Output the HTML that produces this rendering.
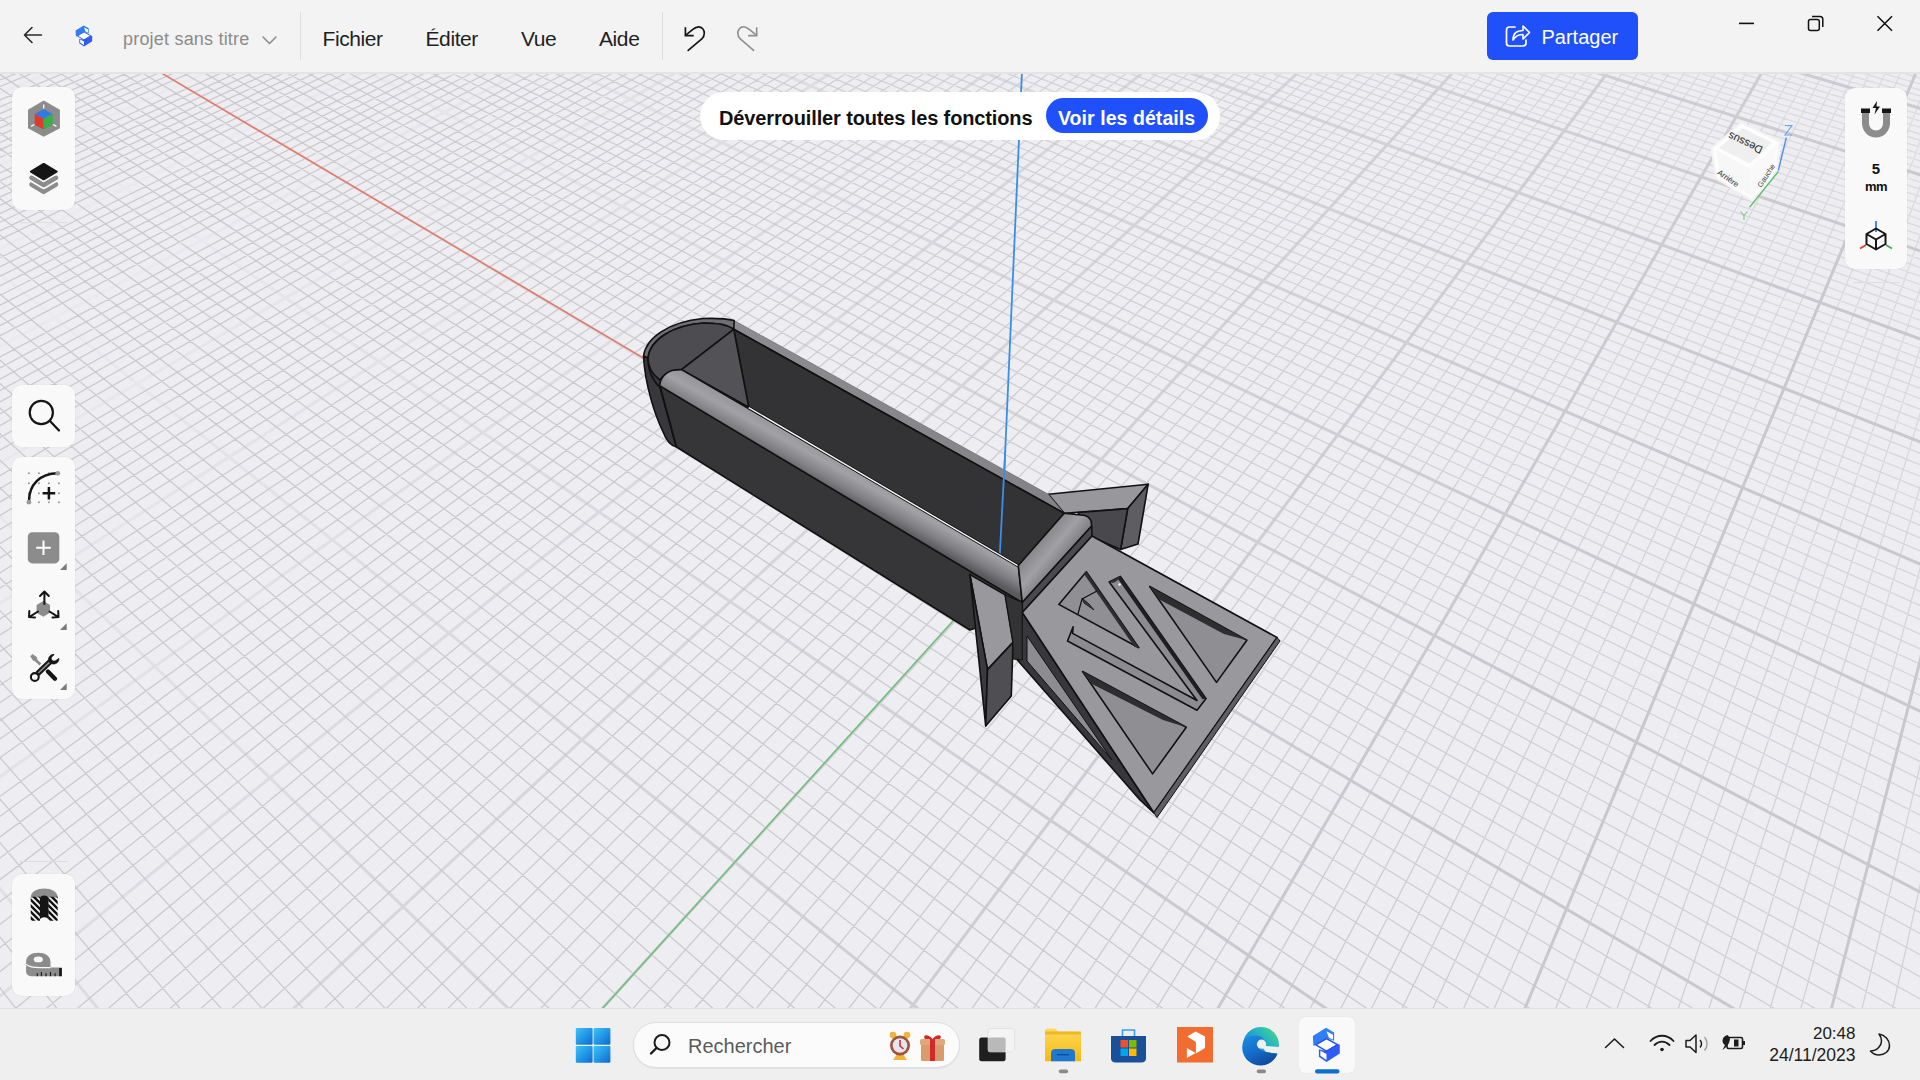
<!DOCTYPE html>
<html><head><meta charset="utf-8">
<style>
html,body{margin:0;padding:0;}
body{width:1920px;height:1080px;overflow:hidden;position:relative;background:#f3f3f3;font-family:"Liberation Sans",sans-serif;}
.abs{position:absolute;}
#topbar{position:absolute;left:0;top:0;width:1920px;height:72px;background:#f3f3f3;}
.menu{position:absolute;top:25px;font-size:20px;color:#1e1e1e;line-height:24px;white-space:nowrap;}
.sep{position:absolute;top:12px;width:1px;height:48px;background:#dcdcdc;}
#scene{position:absolute;left:0;top:0;}
.tb{position:absolute;left:12px;width:63px;background:#f9f9f9;border-radius:10px;box-shadow:0 0 2px rgba(0,0,0,0.08);}
#taskbar{position:absolute;left:0;top:1008px;width:1920px;height:72px;background:#efefef;border-top:1px solid #dedede;}
</style></head><body>
<svg id="scene" width="1920" height="1080" viewBox="0 0 1920 1080">
<defs>
<filter id="gblur" x="0" y="0" width="1" height="1"><feGaussianBlur stdDeviation="0.5"/></filter>
<linearGradient id="mgrad" gradientUnits="userSpaceOnUse" x1="300" y1="72" x2="1300" y2="950"><stop offset="0" stop-color="#fff" stop-opacity="0.1"/><stop offset="0.45" stop-color="#fff" stop-opacity="0.6"/><stop offset="1" stop-color="#fff" stop-opacity="1"/></linearGradient>
<linearGradient id="ngrad" gradientUnits="userSpaceOnUse" x1="1920" y1="72" x2="1100" y2="900"><stop offset="0" stop-color="#fff" stop-opacity="0.5"/><stop offset="1" stop-color="#fff" stop-opacity="1"/></linearGradient>
<mask id="minmask" maskUnits="userSpaceOnUse" x="0" y="72" width="1920" height="936"><rect x="0" y="72" width="1920" height="936" fill="url(#ngrad)"/></mask>
<mask id="majmask" maskUnits="userSpaceOnUse" x="0" y="72" width="1920" height="936"><rect x="0" y="72" width="1920" height="936" fill="url(#mgrad)"/></mask>
<clipPath id="vp"><rect x="0" y="72" width="1920" height="936"/></clipPath>
<linearGradient id="fil" gradientUnits="userSpaceOnUse" x1="840" y1="459" x2="824" y2="488">
<stop offset="0" stop-color="#96969b"/><stop offset="0.3" stop-color="#a1a1a6"/><stop offset="0.7" stop-color="#7e7e83"/><stop offset="1" stop-color="#59595e"/></linearGradient>
<linearGradient id="rim" gradientUnits="userSpaceOnUse" x1="734" y1="320" x2="1064" y2="513">
<stop offset="0" stop-color="#8c8c91"/><stop offset="1" stop-color="#828287"/></linearGradient>
<linearGradient id="efil" gradientUnits="userSpaceOnUse" x1="1040" y1="540" x2="1070" y2="565">
<stop offset="0" stop-color="#86868b"/><stop offset="0.4" stop-color="#a0a0a5"/><stop offset="1" stop-color="#6a6a6f"/></linearGradient>
</defs>
<g clip-path="url(#vp)">
<rect x="0" y="72" width="1920" height="936" fill="#eeedf2"/>
<g filter="url(#gblur)">
<path d="M2208.0 73.6L1737.7 4423.6M2193.1 69.7L1666.3 4304.7M2178.4 65.8L1598.0 4191.1M2163.7 62.0L1532.7 4082.3M2149.2 58.1L1470.1 3978.0M2134.8 54.3L1410.1 3878.1M2120.5 50.6L1352.5 3782.1M2106.3 46.8L1297.1 3690.0M2092.3 43.1L1243.9 3601.4M2064.5 35.8L1143.5 3434.1M2050.7 32.2L1096.0 3355.1M2037.1 28.6L1050.2 3278.9M2023.5 25.1L1006.1 3205.3M2010.1 21.5L963.5 3134.4M1996.8 18.0L922.3 3065.8M1983.6 14.5L882.5 2999.6M1970.5 11.1L844.0 2935.5M1957.5 7.7L806.8 2873.5M1931.7 0.9L735.8 2755.3M1919.0 -2.4L702.0 2699.0M1906.4 -5.8L669.2 2644.4M1893.8 -9.1L637.4 2591.4M1881.4 -12.3L606.5 2540.0M1869.0 -15.6L576.5 2490.0M1856.8 -18.8L547.4 2441.5M1844.6 -22.0L519.1 2394.4M1832.5 -25.2L491.6 2348.6M1808.6 -31.5L438.8 2260.7M1796.8 -34.6L413.5 2218.6M1785.1 -37.7L388.8 2177.5M1773.4 -40.7L364.8 2137.5M1761.9 -43.8L341.4 2098.5M1750.4 -46.8L318.6 2060.6M1739.0 -49.8L296.4 2023.6M1727.7 -52.8L274.7 1987.5M1716.4 -55.7L253.6 1952.2M1694.2 -61.6L212.8 1884.3M1683.2 -64.5L193.1 1851.6M1672.2 -67.4L173.9 1819.6M1661.4 -70.2L155.1 1788.3M1650.6 -73.1L136.8 1757.8M1639.9 -75.9L118.9 1728.0M1629.3 -78.7L101.3 1698.8M1618.7 -81.5L84.2 1670.2M1608.2 -84.2L67.4 1642.3M1587.5 -89.7L35.0 1588.3M1577.2 -92.4L19.3 1562.1M1567.0 -95.1L3.9 1536.5M1556.9 -97.7L-11.2 1511.4M1546.8 -100.4L-26.0 1486.8M1536.8 -103.0L-40.4 1462.7M1526.9 -105.6L-54.6 1439.1M1517.0 -108.2L-68.5 1416.0M1507.2 -110.8L-82.1 1393.3M1487.8 -115.9L-108.5 1349.3M1478.2 -118.4L-121.4 1327.9M1468.6 -120.9L-134.0 1306.9M1459.1 -123.4L-146.3 1286.3M1449.7 -125.9L-158.5 1266.1M1440.3 -128.4L-170.4 1246.3M1431.0 -130.8L-182.1 1226.8M1421.8 -133.3L-193.6 1207.7M1412.6 -135.7L-204.8 1188.9M1394.4 -140.5L-226.8 1152.4M1385.4 -142.8L-237.5 1134.6M1376.5 -145.2L-248.0 1117.1M1367.6 -147.5L-258.3 1099.9M1358.7 -149.9L-268.5 1083.0M1349.9 -152.2L-278.5 1066.4M1341.2 -154.5L-288.3 1050.0M1332.5 -156.8L-297.9 1033.9M1323.9 -159.0L-307.4 1018.1M1306.8 -163.5L-325.9 987.3M1298.3 -165.8L-335.0 972.2M1289.9 -168.0L-343.9 957.4M1281.6 -170.2L-352.6 942.8M1273.2 -172.4L-361.2 928.5M1265.0 -174.5L-369.7 914.4M1256.8 -176.7L-378.1 900.5M1248.6 -178.8L-386.3 886.8M1240.5 -181.0L-394.4 873.3M1224.4 -185.2L-410.2 846.9M1216.4 -187.3L-418.0 834.0M1208.5 -189.4L-425.6 821.3M1200.6 -191.5L-433.1 808.8M1192.8 -193.5L-440.5 796.5M1185.0 -195.6L-447.8 784.3M1177.3 -197.6L-455.0 772.3M1169.6 -199.6L-462.1 760.5M1162.0 -201.6L-469.1 748.9M1146.8 -205.6L-482.8 726.0M1139.3 -207.6L-489.5 714.9M1131.8 -209.6L-496.1 703.9M1124.4 -211.5L-502.7 693.0M1117.0 -213.5L-509.1 682.3M1109.7 -215.4L-515.4 671.7M1102.4 -217.3L-521.7 661.3M1095.1 -219.2L-527.9 651.0M1087.9 -221.1L-534.0 640.8M1073.6 -224.9L-545.9 620.9M1066.5 -226.8L-551.8 611.2M1059.4 -228.6L-557.6 601.5M1052.4 -230.5L-563.3 592.0M1045.4 -232.3L-569.0 582.6M1038.5 -234.1L-574.5 573.3M1031.6 -235.9L-580.0 564.2M1024.7 -237.8L-585.5 555.1M1017.9 -239.5L-590.8 546.2M1004.3 -243.1L-601.4 528.6M997.6 -244.9L-606.5 520.0M990.9 -246.6L-611.6 511.5M984.3 -248.4L-616.7 503.1M977.7 -250.1L-621.7 494.8M971.1 -251.8L-626.6 486.6M964.6 -253.6L-631.5 478.5M958.1 -255.3L-636.3 470.5M951.6 -257.0L-641.1 462.6M938.8 -260.4L-650.4 447.0M932.4 -262.0L-655.0 439.3M926.1 -263.7L-659.5 431.8M919.8 -265.3L-664.0 424.3M913.6 -267.0L-668.5 416.9M907.3 -268.6L-672.9 409.6M901.1 -270.3L-677.2 402.3M895.0 -271.9L-681.5 395.2M888.8 -273.5L-685.7 388.1M876.7 -276.7L-694.1 374.2M870.6 -278.3L-698.2 367.4M864.6 -279.9L-702.3 360.6M858.7 -281.4L-706.3 353.9M852.7 -283.0L-710.3 347.3M846.8 -284.6L-714.2 340.7M840.9 -286.1L-718.1 334.2M835.1 -287.6L-722.0 327.8M829.2 -289.2L-725.8 321.5M2222.6 82.8L818.4 -288.7M2222.1 88.1L813.3 -286.7M2221.6 93.5L808.1 -284.7M2221.1 98.9L802.9 -282.7M2220.6 104.4L797.7 -280.7M2220.1 109.9L792.4 -278.6M2219.5 115.5L787.1 -276.5M2219.0 121.2L781.8 -274.5M2218.5 126.9L776.4 -272.4M2217.4 138.6L765.6 -268.1M2216.9 144.6L760.1 -266.0M2216.3 150.6L754.6 -263.8M2215.8 156.7L749.0 -261.7M2215.2 162.8L743.4 -259.5M2214.6 169.1L737.8 -257.3M2214.1 175.4L732.1 -255.1M2213.5 181.7L726.3 -252.8M2212.9 188.2L720.6 -250.6M2211.7 201.4L708.9 -246.0M2211.0 208.1L703.0 -243.7M2210.4 214.9L697.1 -241.4M2209.8 221.8L691.1 -239.1M2209.2 228.7L685.1 -236.7M2208.5 235.8L679.0 -234.4M2207.8 242.9L672.9 -232.0M2207.2 250.2L666.7 -229.6M2206.5 257.5L660.5 -227.1M2205.1 272.5L647.9 -222.2M2204.4 280.1L641.6 -219.8M2203.7 287.8L635.2 -217.3M2203.0 295.7L628.7 -214.7M2202.3 303.6L622.2 -212.2M2201.5 311.7L615.7 -209.6M2200.8 319.8L609.1 -207.1M2200.0 328.1L602.4 -204.5M2199.3 336.5L595.7 -201.9M2197.7 353.7L582.1 -196.6M2196.9 362.4L575.3 -193.9M2196.1 371.3L568.3 -191.2M2195.2 380.3L561.4 -188.5M2194.4 389.4L554.3 -185.7M2193.5 398.7L547.2 -182.9M2192.7 408.1L540.1 -180.2M2191.8 417.7L532.9 -177.3M2190.9 427.4L525.6 -174.5M2189.1 447.2L510.9 -168.8M2188.1 457.4L503.5 -165.9M2187.2 467.7L496.0 -162.9M2186.2 478.2L488.4 -160.0M2185.3 488.8L480.7 -157.0M2184.3 499.6L473.0 -154.0M2183.3 510.6L465.3 -151.0M2182.2 521.8L457.4 -147.9M2181.2 533.1L449.6 -144.8M2179.1 556.3L433.6 -138.6M2178.0 568.2L425.4 -135.4M2176.9 580.4L417.3 -132.2M2175.7 592.7L409.0 -129.0M2174.6 605.2L400.7 -125.8M2173.4 617.9L392.3 -122.5M2172.2 630.9L383.9 -119.2M2171.0 644.1L375.3 -115.9M2169.8 657.5L366.7 -112.5M2167.2 685.1L349.2 -105.7M2165.9 699.3L340.4 -102.2M2164.6 713.7L331.5 -98.8M2163.3 728.4L322.5 -95.2M2161.9 743.4L313.4 -91.7M2160.5 758.6L304.2 -88.1M2159.1 774.2L294.9 -84.5M2157.6 790.0L285.6 -80.9M2156.1 806.2L276.1 -77.2M2153.1 839.4L257.0 -69.7M2151.5 856.6L247.3 -65.9M2149.9 874.0L237.5 -62.1M2148.2 891.9L227.6 -58.3M2146.6 910.1L217.6 -54.4M2144.9 928.7L207.6 -50.4M2143.1 947.6L197.4 -46.5M2141.3 967.0L187.1 -42.4M2139.5 986.8L176.7 -38.4M2135.8 1027.7L155.7 -30.2M2133.8 1048.9L145.0 -26.0M2131.8 1070.5L134.2 -21.8M2129.8 1092.6L123.3 -17.5M2127.7 1115.2L112.3 -13.2M2125.6 1138.3L101.2 -8.9M2123.4 1162.0L89.9 -4.5M2121.2 1186.3L78.6 -0.1M2118.9 1211.1L67.1 4.4M2114.2 1262.6L43.8 13.5M2111.7 1289.4L32.0 18.1M2109.2 1316.8L20.0 22.7M2106.6 1344.9L7.9 27.5M2104.0 1373.7L-4.3 32.2M2101.3 1403.3L-16.6 37.0M2098.5 1433.7L-29.1 41.9M2095.6 1464.9L-41.7 46.8M2092.7 1497.0L-54.4 51.8M2086.5 1563.9L-80.3 61.9M2083.3 1598.8L-93.5 67.0M2080.0 1634.6L-106.8 72.2M2076.6 1671.6L-120.2 77.5M2073.1 1709.6L-133.9 82.8M2069.5 1748.8L-147.6 88.1M2065.8 1789.2L-161.5 93.6M2062.0 1830.9L-175.6 99.1M2058.0 1873.9L-189.8 104.6M2049.7 1964.2L-218.8 115.9M2045.4 2011.6L-233.6 121.7M2040.9 2060.6L-248.5 127.5M2036.2 2111.3L-263.6 133.4M2031.4 2163.8L-278.8 139.3M2026.4 2218.1L-294.3 145.4M2021.2 2274.5L-309.9 151.5M2015.9 2332.9L-325.7 157.6M2010.3 2393.6L-341.7 163.9M1998.5 2522.1L-374.4 176.6M1992.3 2590.2L-391.0 183.1M1985.7 2661.0L-407.8 189.6M1979.0 2734.9L-424.8 196.3M1971.9 2811.9L-442.1 203.0M1964.5 2892.3L-459.5 209.8M1956.8 2976.3L-477.2 216.7M1948.7 3064.1L-495.1 223.7M1940.3 3155.9L-513.3 230.8M1922.2 3353.2L-550.3 245.2M1912.4 3459.3L-569.1 252.6M1902.2 3570.9L-588.3 260.1M1891.4 3688.3L-607.6 267.6M1880.0 3812.2L-627.3 275.3M1868.0 3942.9L-647.2 283.0M1855.3 4081.1L-667.3 290.9M1841.9 4227.6L-687.8 298.9M1827.6 4382.9L-708.5 307.0" stroke="#cbcacf" stroke-width="1.3" fill="none" mask="url(#minmask)"/>
<path d="M2223.0 77.6L1812.4 4548.0M2078.3 39.5L1192.7 3516.2M1944.5 4.3L770.7 2813.5M1820.5 -28.4L464.8 2304.1M1705.3 -58.7L232.9 1917.9M1597.8 -87.0L51.0 1615.0M1497.5 -113.4L-95.4 1371.1M1403.5 -138.1L-215.9 1170.5M1315.3 -161.3L-316.7 1002.6M1232.4 -183.1L-402.4 860.0M1154.4 -203.6L-476.0 737.4M1080.7 -223.0L-540.0 630.8M1011.1 -241.3L-596.1 537.4M945.2 -258.7L-645.8 454.7M882.7 -275.1L-690.0 381.1M823.4 -290.7L-729.6 315.2M2223.0 77.6L823.4 -290.7M2218.0 132.7L771.0 -270.3M2212.3 194.8L714.8 -248.3M2205.8 264.9L654.2 -224.7M2198.5 345.0L589.0 -199.2M2190.0 437.2L518.3 -171.7M2180.1 544.6L441.6 -141.7M2168.5 671.2L358.0 -109.1M2154.6 822.6L266.6 -73.5M2137.7 1007.1L166.3 -34.3M2116.6 1236.6L55.5 8.9M2089.6 1530.0L-67.3 56.8M2054.0 1918.3L-204.2 110.2M2004.5 2456.6L-357.9 170.2M1931.4 3252.2L-531.7 238.0M1812.4 4548.0L-729.6 315.2" stroke="#c9c8cd" stroke-width="3" fill="none" mask="url(#majmask)"/>
</g>
<line x1="1000" y1="569" x2="43" y2="3" stroke="#e07a6c" stroke-width="1.6"/>
<line x1="1000" y1="569" x2="34" y2="1637" stroke="#6cc07a" stroke-width="1.6"/>
<line x1="1000" y1="569" x2="1022.5" y2="60" stroke="#3a8ee8" stroke-width="1.8"/>
<rect x="0" y="72" width="1920" height="2" fill="#e4e4e6"/>
<g stroke="#111" stroke-width="1.6" stroke-linejoin="round">
<path d="M643.5,356 C646,338 668,322 703,318.5 C718,318 728,319 734.2,320.5 L1048.3,494.2 L1091.7,526 L1022.3,612.5 L969.9,630 L676.5,447 C671,446 666,440 662.6,430.8 C655,415 645,385 643.5,356 Z" fill="#38383c" stroke="none"/>
<!-- top fin -->
<polygon points="1048.3,494.2 1148.2,484.2 1127.7,508.6 1064.2,513.3" fill="#97979c"/>
<polygon points="1127.7,508.6 1148.2,484.2 1138,544 1120.6,549.5" fill="#5d5d62"/>
<polygon points="1078,512.5 1127.7,508.6 1120.6,549.5 1092,537" fill="#48484d"/>
<!-- back rim strip -->
<polygon points="734.2,320.5 1048.3,494.2 1064.2,513.3 733.75,329.3" fill="url(#rim)" stroke="none"/>
<line x1="733.75" y1="329.3" x2="1064.2" y2="513.3"/>
<!-- inner back wall -->
<polygon points="733.75,329.3 1064.2,513.3 1018.3,566 748.75,407.2" fill="#333336"/>
<line x1="1005.3" y1="450" x2="999.8" y2="554.5" stroke="#3a8ee8" stroke-width="1.8"/>
<!-- cap outer wall -->
<path d="M643.5,356 C645,385 655,415 662.6,430.8 C666,440 671,446 676.5,447 L660,387.4 C652,380 648,370 648,358 Z" fill="#38383c"/>
<!-- cap rim -->
<path d="M643.5,356 C646,338 668,322 703,318.5 C718,318 728,319 734.2,320.5 L733.75,329.3 C728,325 716,323 704,323 C672,325 650,340 648,358 Z" fill="#6e6e73"/>
<!-- cap interior -->
<path d="M648,358 C650,340 672,325 704,323 C716,323 728,325 733.75,329.3 L681.5,369.6 C672,370 664,374 660,380 C653,375 648,367 648,358 Z" fill="#4c4c51"/>
<!-- inner end wall -->
<polygon points="681.5,369.6 733.75,329.3 748.75,407.2" fill="#525257"/>
<!-- front outer wall -->
<polygon points="660,385.9 1022.3,602.5 1022.3,612.5 969.9,630 676.5,447" fill="#363639"/>
<line x1="660" y1="387.4" x2="674.5" y2="441" stroke-width="1.2"/>
<!-- front fillet -->
<path d="M660,385.9 C659,381 664,373 672,370.5 C675,369.8 678,369.6 681.5,369.6 L1018.3,565.5 L1022.3,602.5 Z" fill="url(#fil)"/>
<line x1="748.75" y1="407.6" x2="1018.3" y2="566" stroke="#111" stroke-width="3"/>
<line x1="748.75" y1="407.6" x2="1018.3" y2="566" stroke="#f6f6f6" stroke-width="1.4"/>
<!-- end fillet -->
<path d="M1018.3,565.5 L1064.2,513.3 L1085,515.5 C1090,517 1091.7,521 1091.7,526 L1022.3,602.5 Z" fill="url(#efil)"/>
<polygon points="1091.7,526 1092,536 1022.3,612.5 1022.3,602.5" fill="#4a4a4f"/>
<!-- plate wedge/underside -->
<polygon points="1022.3,612.5 1153.9,812.8 1140,800 1017.4,660 1018.3,615" fill="#38383c"/>
<polygon points="1027,636 1027,661 1112,760" fill="#8c8c91" stroke-width="1"/>
<!-- lower fin -->
<polygon points="969.9,574.6 1005.1,594.9 1013,642.4 987.5,669.6" fill="#98989d"/>
<polygon points="969.9,574.6 987.5,669.6 985.7,725.9" fill="#3b3b3f"/>
<polygon points="987.5,669.6 1013,642.4 1011.3,696 985.7,725.9" fill="#4e4e53"/>
<polygon points="1005.1,594.9 1022.3,602.5 1022.3,660 1013,659 1013,642.4" fill="#333336" stroke-width="1"/>
<!-- plate top -->
<polygon points="1092,536 1277,637.5 1153.9,812.8 1022.3,612.5" fill="#98989d"/>
<polygon points="1277,637.5 1280,641 1157,817.5 1153.9,812.8" fill="#5e5e63" stroke-width="1"/>
<!-- cutout T1 -->
<polygon points="1149.7,586.5 1246.9,640.3 1216.5,682.4" fill="#8e8e93"/>
<polygon points="1149.7,586.5 1246.9,640.3 1224,634 1159.4,599.4" fill="#2e2e31" stroke="none"/>
<!-- cutout T2 -->
<polygon points="1082.6,671.5 1186.3,727.2 1152.6,773.9" fill="#8e8e93"/>
<polygon points="1082.6,671.5 1186.3,727.2 1163,720 1092,684" fill="#2e2e31" stroke="none"/>
<!-- cutout T3 -->
<polygon points="1086.3,571.8 1058.8,604.4 1138.8,647.7" fill="#8f8f94"/>
<polygon points="1086.3,571.8 1138.8,647.7 1134.5,647 1084,574" fill="#2e2e31" stroke="none"/>
<polyline points="1078,614 1082,599 1097,591" fill="none" stroke-width="1.2"/>
<polygon points="1082,598 1089,604 1094,610 1084,603" fill="#3a3a3e" stroke-width="0.8"/>
<!-- slot arms -->
<polygon points="1109.2,582 1120.4,576.4 1206.1,698.6 1197,710.2 1067.5,641 1073.1,626.8 1072.6,633.4 1197,700.5" fill="#8b8b90"/>
<polygon points="1120.4,576.4 1206.1,698.6 1202.5,699.2 1117.8,578.8" fill="#1f1f22" stroke="none"/>
<polygon points="1109.2,582 1120.4,576.4 1117,581 1113,583" fill="#333" stroke="none"/>
<circle cx="1119.5" cy="584.5" r="1.3" fill="#f0f0f0" stroke="none"/>
</g>

</g>
</svg>
<div id="topbar"></div>
<!-- top bar content -->
<svg class="abs" style="left:0;top:0" width="800" height="72" viewBox="0 0 800 72">
<path d="M25,35 L41.5,35 M32,27.5 L24.5,35 L32,42.5" stroke="#2b2b2b" stroke-width="1.6" fill="none" stroke-linecap="round" stroke-linejoin="round"/>
<g>
<path d="M75.6,30.4 L83.7,25.4 L88.7,28.3 L88.7,33.4 L84,31.8 L77.4,35.9 L75.9,36.6 Z" fill="#2d7ef7"/>
<path d="M84,27.5 L88,29.6 L88,32.6 L85.5,31.6 Z" fill="#fff"/>
<path d="M92.2,35.7 L92.2,41.3 L84,46.5 L79.3,43.2 L79.3,38.7 L84,39.8 L90.7,35.7 Z" fill="#2f5cf6"/>
<path d="M80.2,39.5 L84,41.6 L84,45.2 L80.2,42.6 Z" fill="#fff"/>
<path d="M77.4,35.9 L84,32 L90.7,35.7 L84,39.8 Z" fill="#fff" stroke="#2a4fd8" stroke-width="0.9"/>
</g>
<path d="M263,37 L269.5,43.5 L276,37" stroke="#8a8a8a" stroke-width="1.5" fill="none" stroke-linecap="round" stroke-linejoin="round"/>
<rect x="300" y="12" width="1" height="48" fill="#dedede"/>
<rect x="662" y="12" width="1" height="48" fill="#dedede"/>
<path d="M685.4,27.2 L685.4,35.6 L693.7,35.6" stroke="#151515" stroke-width="1.7" fill="none"/>
<path d="M685.8,35.2 L692.5,29.6 C695,27.6 697,26.8 698.5,26.8 C702,26.8 704.3,29.8 704.3,33.2 C704.3,35.5 703.3,37.5 701.8,38.8 L688.2,50.4" stroke="#151515" stroke-width="1.7" fill="none" stroke-linecap="round"/>
<path d="M756.7,27.2 L756.7,35.6 L748.1,35.6" stroke="#8e8e8e" stroke-width="1.6" fill="none"/>
<path d="M756.3,35.2 L749.6,29.6 C747.1,27.6 745.1,26.8 743.6,26.8 C740.1,26.8 737.8,29.8 737.8,33.2 C737.8,35.5 738.8,37.5 740.3,38.8 L753.6,50.4" stroke="#8e8e8e" stroke-width="1.6" fill="none" stroke-linecap="round"/>
</svg>
<div class="abs" style="left:123px;top:29.8px;font-size:18px;line-height:18px;color:#8b8b8b;letter-spacing:0.2px;white-space:nowrap">projet sans titre</div>
<div class="abs" style="left:322.5px;top:27.7px;font-size:21px;line-height:21px;color:#1f1f1f;letter-spacing:-0.4px;white-space:nowrap">Fichier</div>
<div class="abs" style="left:425.5px;top:27.7px;font-size:21px;line-height:21px;color:#1f1f1f;letter-spacing:-0.4px;white-space:nowrap">Éditer</div>
<div class="abs" style="left:521px;top:27.7px;font-size:21px;line-height:21px;color:#1f1f1f;letter-spacing:-0.4px;white-space:nowrap">Vue</div>
<div class="abs" style="left:599px;top:27.7px;font-size:21px;line-height:21px;color:#1f1f1f;letter-spacing:-0.4px;white-space:nowrap">Aide</div>
<!-- Partager -->
<div class="abs" style="left:1487px;top:12px;width:151px;height:48px;background:#2050fa;border-radius:6px;"></div>
<svg class="abs" style="left:1500px;top:18px" width="36" height="34" viewBox="1500 18 36 34">
<path d="M1515,27 L1509.5,27 C1507.5,27 1506.5,28 1506.5,30 L1506.5,43 C1506.5,45 1507.5,46 1509.5,46 L1523,46 C1525,46 1526,45 1526,43 L1526,40" stroke="#fff" stroke-width="1.7" fill="none" stroke-linecap="round"/>
<path d="M1513,40 C1513,33 1517,30.5 1523,30.5 L1523,26 L1529.5,32.5 L1523,39 L1523,34.5 C1518.5,34.5 1515.5,36 1513,40 Z" stroke="#fff" stroke-width="1.6" fill="none" stroke-linejoin="round"/>
</svg>
<div class="abs" style="left:1541.5px;top:27.1px;font-size:20px;line-height:20px;color:#fff;white-space:nowrap">Partager</div>
<!-- window controls -->
<svg class="abs" style="left:1720px;top:0" width="200" height="50" viewBox="1720 0 200 50">
<rect x="1739" y="22.6" width="15" height="1.6" fill="#111"/>
<rect x="1808.5" y="19.6" width="10.8" height="10.9" rx="2" stroke="#111" stroke-width="1.5" fill="none"/>
<path d="M1812,16.4 L1820,16.4 C1821.8,16.4 1822.8,17.6 1822.8,19.2 L1822.8,27" stroke="#111" stroke-width="1.5" fill="none"/>
<path d="M1877.5,16.2 L1892,30.8 M1892,16.2 L1877.5,30.8" stroke="#111" stroke-width="1.5"/>
</svg>
<!-- banner -->
<div class="abs" style="left:700px;top:92px;width:520px;height:48px;background:#fff;border-radius:24px;"></div>
<div class="abs" style="left:719px;top:108.1px;font-size:20px;line-height:20px;font-weight:bold;color:#111;letter-spacing:-0.13px;white-space:nowrap">Déverrouiller toutes les fonctions</div>
<div class="abs" style="left:1046px;top:98.3px;width:161.5px;height:35px;background:#2050fa;border-radius:18px;"></div>
<div class="abs" style="left:1058px;top:108.8px;font-size:19.5px;line-height:19.5px;font-weight:bold;color:#fff;letter-spacing:0.06px;white-space:nowrap">Voir les détails</div>
<!-- left toolbars -->
<div class="abs" style="left:20px;top:222px;width:48px;height:1px;background:#dedde2"></div>
<div class="tb" style="top:87px;height:123px"></div>
<div class="tb" style="top:385px;height:62px"></div>
<div class="tb" style="top:457px;height:242px"></div>
<div class="tb" style="top:874px;height:122px"></div>
<div class="abs" style="left:20px;top:860.5px;width:48px;height:1px;background:#dcdcde"></div>
<svg class="abs" style="left:0;top:80px" width="90" height="930" viewBox="0 80 90 930">
<!-- color cube -->
<polygon points="43.7,100.6 59.9,109.7 59.9,128.3 43.7,136.7 28,128.3 28,109.7" fill="#8c8c8c"/>
<polygon points="34.7,113.9 43.7,109 52.7,113.9 43.7,118.7" fill="#2f7be8"/>
<polygon points="34.7,113.9 43.7,118.7 43.7,129.5 34.7,124.7" fill="#de3b2f"/>
<polygon points="43.7,118.7 52.7,113.9 52.7,124.7 43.7,129.5" fill="#3aae4a"/>
<path d="M43.7,104.5 L43.7,108.5 M31,126.3 L34.5,124.5 M53,124.5 L56.5,126.3" stroke="#fff" stroke-width="1.3"/>
<!-- layers -->
<path d="M31.5,184.5 L43.7,191.8 L56,184.5" stroke="#8c8c8c" stroke-width="4.6" fill="none" stroke-linecap="round" stroke-linejoin="round"/>
<path d="M31.5,177.8 L43.7,185.1 L56,177.8" stroke="#f9f9f9" stroke-width="8" fill="none" stroke-linecap="round" stroke-linejoin="round"/>
<path d="M31.5,177.8 L43.7,185.1 L56,177.8" stroke="#8c8c8c" stroke-width="4.6" fill="none" stroke-linecap="round" stroke-linejoin="round"/>
<polygon points="31,171.6 43.7,164 56.6,171.6 43.7,179.2" fill="#151515" stroke="#f9f9f9" stroke-width="5" stroke-linejoin="round"/>
<polygon points="31,171.6 43.7,164 56.6,171.6 43.7,179.2" fill="#151515" stroke="#151515" stroke-width="2.2" stroke-linejoin="round"/>
<!-- search -->
<circle cx="41.3" cy="412.5" r="11.6" stroke="#151515" stroke-width="2.2" fill="none"/>
<path d="M49.7,420.8 L59,430.5" stroke="#151515" stroke-width="2.3" stroke-linecap="round"/>
<!-- sketch -->
<g fill="#9a9a9a">
<circle cx="28.9" cy="473.3" r="1.05"/><circle cx="38.9" cy="473.3" r="1.05"/><circle cx="48.9" cy="473.3" r="1.05"/>
<circle cx="28.9" cy="483.3" r="1.05"/><circle cx="38.9" cy="483.3" r="1.05"/><circle cx="48.9" cy="483.3" r="1.05"/><circle cx="58.9" cy="483.3" r="1.05"/>
<circle cx="28.9" cy="493.3" r="1.05"/><circle cx="38.9" cy="493.3" r="1.05"/><circle cx="58.9" cy="493.3" r="1.05"/>
<circle cx="38.9" cy="502.2" r="1.05"/><circle cx="48.9" cy="502.2" r="1.05"/><circle cx="58.9" cy="502.2" r="1.05"/>
</g>
<path d="M29,501 C29,485 40,473.5 57.5,473.3" stroke="#151515" stroke-width="2.4" fill="none"/>
<circle cx="28.9" cy="502.2" r="2.4" fill="#9a9a9a"/><circle cx="57.8" cy="473.3" r="2.4" fill="#9a9a9a"/>
<path d="M48.9,487 L48.9,499.6 M42.6,493.3 L55.2,493.3" stroke="#151515" stroke-width="2.5"/>
<!-- add box -->
<rect x="27.8" y="532.2" width="31.5" height="31.2" rx="4.5" fill="#8c8c8c"/>
<path d="M43.5,540.5 L43.5,555 M36.2,547.8 L50.8,547.8" stroke="#fff" stroke-width="2"/>
<polygon points="60,570 66.7,570 66.7,563.3" fill="#7a7a7a"/>
<!-- transform -->
<polygon points="43.3,601 50,605 50,612.8 43.3,616.8 36.6,612.8 36.6,605" fill="#8c8c8c"/>
<path d="M44.4,604 L44.4,592 M40,596 L44.4,591.5 L48.8,596" stroke="#151515" stroke-width="2" fill="none" stroke-linecap="round" stroke-linejoin="round"/>
<path d="M38,611.5 L29.5,616.8 M29.3,611 L29,617 L35,617.5" stroke="#151515" stroke-width="2" fill="none" stroke-linecap="round" stroke-linejoin="round"/>
<path d="M49.5,611.5 L58,616.8 M58.2,611 L58.5,617 L52.5,617.5" stroke="#151515" stroke-width="2" fill="none" stroke-linecap="round" stroke-linejoin="round"/>
<polygon points="60,630 66.7,630 66.7,623.3" fill="#7a7a7a"/>
<!-- tools -->
<polygon points="30.2,656.2 32.5,654.1 36.7,656.9 37.6,659.9 41.3,663.6 39.4,665.5 35.7,661.8 33,660.6" fill="#8c8c8c"/>
<path d="M47.9,671.6 L55,678.8" stroke="#151515" stroke-width="4.3" stroke-linecap="round"/>
<path d="M37.5,673.8 L50.5,661.3" stroke="#151515" stroke-width="5.6"/>
<path d="M38.3,673 L49.7,662.1" stroke="#8c8c8c" stroke-width="1.6"/>
<circle cx="34.8" cy="677" r="3.9" stroke="#151515" stroke-width="2.1" fill="#f9f9f9"/>
<path d="M54,654.3 C51,654.2 48.5,656.8 48.5,659.6 C48.5,660.5 48.8,661.3 49.3,662.1 L50.3,663 C51.6,663.8 52.6,664 53.6,664 C56.8,664 59,661.5 59,658.5 L56.2,660.3 C55.4,661 54.3,661.3 53.3,661 C51.9,660.6 51,659.2 51.4,657.6 C51.7,656.6 52.5,655.8 53.4,655.5 Z" fill="#151515" stroke="#151515" stroke-width="0.8" stroke-linejoin="round"/>
<polygon points="60,690 66.7,690 66.7,683.3" fill="#7a7a7a"/>
<!-- section view -->
<defs>
<clipPath id="hatchL"><rect x="30.7" y="896.8" width="9.3" height="24"/></clipPath>
<clipPath id="hatchR"><rect x="48.2" y="896.8" width="9.5" height="24"/></clipPath>
</defs>
<path d="M30.7,897.5 C30.7,885.5 57.7,885.5 57.7,897.5 Z" fill="#8c8c8c"/>
<g clip-path="url(#hatchL)" stroke="#151515" stroke-width="2.6">
<path d="M24,893 L44,913 M24,899 L44,919 M24,905 L44,925 M24,911 L44,931 M24,887 L44,907 M24,881 L44,901"/>
</g>
<g clip-path="url(#hatchR)" stroke="#151515" stroke-width="2.6">
<path d="M42,893 L62,913 M42,899 L62,919 M42,905 L62,925 M42,911 L62,931 M42,887 L62,907 M42,881 L62,901"/>
</g>
<path d="M39.9,898.5 C39.9,894.5 48.5,894.5 48.5,898.5 L48.5,919.5 C47,916.5 41.5,916.5 39.9,919.5 Z" fill="#151515"/>
<!-- tape -->
<path d="M26.1,962 C26.1,956 31.5,952.8 38.3,952.8 C45,952.8 50.5,956 50.5,962 L50.5,967.6 L61.8,967.6 L61.8,976.2 L31,976.2 C28,976.2 26.1,974 26.1,971.5 Z" fill="#8c8c8c"/>
<ellipse cx="38.3" cy="959.4" rx="4.6" ry="2.9" fill="#f9f9f9"/>
<path d="M26.1,964.3 C29,967 34,967.7 40,967.7 L50.5,967.7" stroke="#f9f9f9" stroke-width="1.3" fill="none"/>
<rect x="59.2" y="968" width="2.6" height="8.2" fill="#151515"/>
<path d="M37.3,976.2 L37.3,973.2 M41.4,976.2 L41.4,972 M46,976.2 L46,973.2 M50.5,976.2 L50.5,972 M55.1,976.2 L55.1,973.2" stroke="#151515" stroke-width="1.1"/>
</svg>
<!-- right toolbar -->
<div class="abs" style="left:1853px;top:282px;width:47px;height:1px;background:#dedde2"></div>
<div class="abs" style="left:1845px;top:88px;width:62px;height:181px;background:#f9f9f9;border-radius:10px;box-shadow:0 0 2px rgba(0,0,0,0.08)"></div>
<svg class="abs" style="left:1845px;top:88px" width="62" height="181" viewBox="1845 88 62 181">
<path d="M1862,111 L1862,123 C1862,131.5 1868.5,137.5 1876,137.5 C1883.5,137.5 1890,131.5 1890,123 L1890,111 L1883,111 L1883,123 C1883,127.5 1880,130.5 1876,130.5 C1872,130.5 1869,127.5 1869,123 L1869,111 Z" fill="#8c8c8c"/>
<rect x="1861" y="108.5" width="9" height="4.5" fill="#151515"/>
<rect x="1882" y="108.5" width="9" height="4.5" fill="#151515"/>
<path d="M1877,101 L1872.5,108 L1876,108 L1874.5,114.5 L1880,106.5 L1876.5,106.5 Z" fill="#151515"/>
<path d="M1876,232 L1876,221" stroke="#2f7be8" stroke-width="1.8"/>
<path d="M1866,245 L1860,248.5" stroke="#de3b2f" stroke-width="1.8"/>
<path d="M1886,245 L1892,248.5" stroke="#3aae4a" stroke-width="1.8"/>
<path d="M1876,228.5 L1885.5,234 L1885.5,244 L1876,249.5 L1866.5,244 L1866.5,234 Z M1866.5,234 L1876,239.5 L1885.5,234 M1876,239.5 L1876,249.5" stroke="#151515" stroke-width="2" fill="none" stroke-linejoin="round"/>
</svg>
<div class="abs" style="left:1845px;top:161px;width:62px;text-align:center;font-size:15px;line-height:15px;font-weight:bold;color:#111">5</div>
<div class="abs" style="left:1845px;top:180px;width:62px;text-align:center;font-size:13px;line-height:13px;font-weight:bold;color:#111;letter-spacing:-0.5px">mm</div>
<!-- nav cube -->
<svg class="abs" style="left:1700px;top:110px" width="100" height="115" viewBox="1700 110 100 115">
<defs><filter id="cblur" x="-20%" y="-20%" width="140%" height="140%"><feGaussianBlur stdDeviation="0.7"/></filter></defs>
<g filter="url(#cblur)">
<path d="M1711.7,148.3 L1741.5,122.8 L1779.9,142 L1776.7,171.8 L1752.2,200.5 L1716,178.2 Z" fill="#fdfdfd" stroke="#f4f4f4" stroke-width="2" stroke-linejoin="round"/>
<polygon points="1716.5,150 1750,169 1751.5,196 1719,176" fill="#f7f7f7"/>
<polygon points="1750,169 1776.5,145 1774,170.5 1751.5,196" fill="#f9f9f9"/>
<polygon points="1742.5,128 1772,142.5 1749.5,163.5 1719,148" fill="#efefef"/>
</g>
<text x="0" y="0" font-size="11" font-family="Liberation Sans" fill="#2a2a2a" transform="translate(1746,143.5) rotate(205) translate(-17.5,4)">Dessus</text>
<text x="0" y="0" font-size="8" font-family="Liberation Sans" fill="#333" transform="translate(1729.5,179) rotate(35) translate(-13.5,3)">Arrière</text>
<text x="0" y="0" font-size="7.5" font-family="Liberation Sans" fill="#3a3a3a" transform="translate(1766,175.5) rotate(-57) translate(-13,2.8)">Gauche</text>
<path d="M1778.3,170.7 L1786.3,137.7" stroke="#4b8fe6" stroke-width="1.4"/>
<path d="M1778.3,171.5 L1749.5,207.4" stroke="#5cbf6b" stroke-width="1.4"/>
<path d="M1785,125.5 L1792,125.5 L1785,135 L1792,135" stroke="#6aa3ea" stroke-width="1.1" fill="none"/>
<path d="M1740.5,211.5 L1744,215.5 L1747.5,211.5 M1744,215.5 L1744,220" stroke="#7cc488" stroke-width="1.1" fill="none"/>
</svg>
<!-- taskbar -->
<div class="abs" style="left:0;top:1008px;width:1920px;height:72px;background:#efefef;border-top:1.5px solid #e0e0e2"></div>
<div class="abs" style="left:632.7px;top:1022.3px;width:325px;height:44px;background:#fbfbfb;border:1px solid #dedede;border-radius:23px;box-shadow:0 1px 1px rgba(0,0,0,0.06)"></div>
<div class="abs" style="left:1298.5px;top:1017px;width:56px;height:56px;background:#f9f9f9;border-radius:6px;box-shadow:0 0 1px rgba(0,0,0,0.15)"></div>
<div class="abs" style="left:688px;top:1036px;font-size:20px;line-height:20px;color:#5b5b5b;white-space:nowrap">Rechercher</div>
<svg class="abs" style="left:560px;top:1012px" width="800" height="68" viewBox="560 1012 800 68">
<defs>
<linearGradient id="win" x1="0" y1="0" x2="1" y2="1"><stop offset="0" stop-color="#3cc3f7"/><stop offset="1" stop-color="#0b6bd4"/></linearGradient>
<linearGradient id="fold" x1="0" y1="0" x2="0" y2="1"><stop offset="0" stop-color="#ffd95a"/><stop offset="1" stop-color="#f5b90f"/></linearGradient>
<linearGradient id="edge1" x1="0" y1="0" x2="1" y2="1"><stop offset="0" stop-color="#37a8e6"/><stop offset="0.6" stop-color="#2fb3a0"/><stop offset="1" stop-color="#7ad04f"/></linearGradient>
</defs>
<rect x="575.8" y="1027.9" width="16.8" height="16.8" rx="1.2" fill="url(#win)"/>
<rect x="593.6" y="1027.9" width="16.8" height="16.8" rx="1.2" fill="url(#win)"/>
<rect x="575.8" y="1046" width="16.8" height="16.8" rx="1.2" fill="url(#win)"/>
<rect x="593.6" y="1046" width="16.8" height="16.8" rx="1.2" fill="url(#win)"/>
<circle cx="662" cy="1042.5" r="7.5" stroke="#1c1c1c" stroke-width="2" fill="none"/>
<path d="M656.5,1048 L651,1053.5" stroke="#1c1c1c" stroke-width="2.4" stroke-linecap="round"/>
<!-- alarm -->
<circle cx="893" cy="1035" r="3.3" fill="#f2b33d"/><circle cx="907" cy="1035" r="3.3" fill="#f2b33d"/>
<path d="M893,1060 L897,1054 L903,1054 L907,1060 Z" fill="#f2b33d"/>
<circle cx="900" cy="1045.5" r="10" fill="#a0523a"/>
<circle cx="900" cy="1045.5" r="7.3" fill="#e8e4f0"/>
<path d="M900,1040 L900,1046 L903.5,1049" stroke="#c02a2a" stroke-width="1.5" fill="none"/>
<!-- gift -->
<rect x="921" y="1041" width="23" height="20" rx="1.5" fill="#d99a6c"/>
<rect x="920" y="1039" width="25" height="6" rx="1.5" fill="#e1a77a"/>
<rect x="930" y="1039" width="5" height="22" fill="#cf2a2a"/>
<path d="M932.5,1039 C928,1033 922,1035 925,1039 Z M932.5,1039 C937,1033 943,1035 940,1039 Z" fill="#cf2a2a"/>
<!-- task view -->
<rect x="979.2" y="1037.5" width="26.4" height="23.8" rx="2.5" fill="#1f1f1f"/>
<rect x="988" y="1028.5" width="26.6" height="23.5" rx="2.5" fill="#f4f4f4" stroke="#d8d8d8" stroke-width="0.6"/>
<rect x="988" y="1037.5" width="17.6" height="14.5" rx="1.5" fill="#b9b9b9"/>
<!-- explorer -->
<path d="M1045,1031 C1045,1029.5 1046,1028.5 1047.5,1028.5 L1055,1028.5 L1058,1031.5 L1079,1031.5 C1080.5,1031.5 1081,1032.5 1081,1034 L1081,1061.3 L1045,1061.3 Z" fill="url(#fold)"/>
<rect x="1045" y="1031.5" width="36" height="3" fill="#e8a50a" opacity="0.6"/>
<path d="M1051,1061.3 L1051,1053 C1051,1050.5 1053,1049 1055,1049 L1071,1049 C1073,1049 1075,1050.5 1075,1053 L1075,1061.3 Z" fill="#1e78d0"/>
<rect x="1057" y="1054" width="12" height="1.4" fill="#0c4f9a"/>
<rect x="1058.8" y="1069.6" width="9.3" height="3.7" rx="1.8" fill="#8a8a8a"/>
<!-- store -->
<path d="M1111,1036 L1146,1036 L1146,1058.5 C1146,1061 1144,1062.5 1141.5,1062.5 L1115.5,1062.5 C1113,1062.5 1111,1061 1111,1058.5 Z" fill="#1a4f9a"/>
<path d="M1122.5,1036 L1122.5,1030 L1134.5,1030 L1134.5,1036" stroke="#3aa0ea" stroke-width="1.6" fill="none"/>
<rect x="1120.5" y="1040" width="7.5" height="7.5" fill="#f25022"/><rect x="1129" y="1040" width="7.5" height="7.5" fill="#7fba00"/>
<rect x="1120.5" y="1048.5" width="7.5" height="7.5" fill="#00a4ef"/><rect x="1129" y="1048.5" width="7.5" height="7.5" fill="#ffb900"/>
<!-- orange app -->
<rect x="1177" y="1027" width="36" height="35.5" fill="#f26b2f"/>
<polygon points="1195.6,1031.6 1205,1036.6 1205,1048.1 1195.9,1053.4 1195.9,1041.9 1187.2,1036.6" fill="#fff"/>
<polygon points="1186.9,1048.1 1186.9,1058.1 1195.6,1053.1" fill="#fff"/>
<!-- edge -->
<defs>
<linearGradient id="edgeg" x1="0" y1="1" x2="1" y2="0"><stop offset="0" stop-color="#1668c8"/><stop offset="0.45" stop-color="#1c9ad8"/><stop offset="0.75" stop-color="#2fc3b0"/><stop offset="1" stop-color="#62d84e"/></linearGradient>
<linearGradient id="edgew" x1="0" y1="0" x2="0.6" y2="1"><stop offset="0" stop-color="#1f8ee0"/><stop offset="0.5" stop-color="#1570cf"/><stop offset="1" stop-color="#0f4a9c"/></linearGradient>
</defs>
<circle cx="1261" cy="1045" r="18" fill="url(#edgeg)"/>
<path d="M1261,1045.5 L1281,1047.2 L1281,1054.5 L1266,1052 Z" fill="#efefef"/>
<path d="M1243.2,1041.5 C1246.5,1036.5 1253,1035 1258.5,1036 C1262,1036.8 1264,1038.8 1264.5,1040.5 L1257,1044.5 C1257.5,1048.5 1261,1051 1266,1052 C1270,1052.8 1274,1053.2 1277.6,1053.4 A18,18 0 0 1 1243.2,1041.5 Z" fill="url(#edgew)"/>
<circle cx="1261.5" cy="1044.2" r="4.6" fill="#efefef"/>
<rect x="1256.7" y="1069.6" width="9.3" height="3.7" rx="1.8" fill="#8a8a8a"/>
<!-- shapr3d -->
<g transform="translate(1326.5,1045) scale(1.62) translate(-84,-36)">
<path d="M75.6,30.4 L83.7,25.4 L88.7,28.3 L88.7,33.4 L84,31.8 L77.4,35.9 L75.9,36.6 Z" fill="#2d7ef7"/>
<path d="M84,27.5 L88,29.6 L88,32.6 L85.5,31.6 Z" fill="#fff"/>
<path d="M92.2,35.7 L92.2,41.3 L84,46.5 L79.3,43.2 L79.3,38.7 L84,39.8 L90.7,35.7 Z" fill="#2f5cf6"/>
<path d="M80.2,39.5 L84,41.6 L84,45.2 L80.2,42.6 Z" fill="#fff"/>
<path d="M77.4,35.9 L84,32 L90.7,35.7 L84,39.8 Z" fill="#fff" stroke="#2a4fd8" stroke-width="0.9"/>
</g>
<rect x="1315" y="1069.3" width="24.5" height="4.2" rx="2.1" fill="#0c6fd0"/>
</svg>
<!-- tray -->
<svg class="abs" style="left:1590px;top:1020px" width="330" height="50" viewBox="1590 1020 330 50">
<path d="M1605.5,1047.5 L1614.5,1039 L1623.5,1047.5" stroke="#1c1c1c" stroke-width="1.6" fill="none" stroke-linecap="round" stroke-linejoin="round"/>
<path d="M1650.5,1041 C1657,1034 1667,1034 1673.5,1041" stroke="#1c1c1c" stroke-width="1.8" fill="none" stroke-linecap="round"/>
<path d="M1654.5,1045 C1659,1040.5 1665,1040.5 1669.5,1045" stroke="#1c1c1c" stroke-width="1.8" fill="none" stroke-linecap="round"/>
<circle cx="1662" cy="1049.5" r="1.8" fill="#1c1c1c"/>
<path d="M1686,1040.5 L1690,1040.5 L1696,1035 L1696,1052.5 L1690,1047 L1686,1047 Z" stroke="#1c1c1c" stroke-width="1.5" fill="none" stroke-linejoin="round"/>
<path d="M1700,1040 C1702,1042 1702,1045.5 1700,1047.5" stroke="#1c1c1c" stroke-width="1.5" fill="none"/>
<path d="M1704.5,1037 C1708,1041 1708,1046.5 1704.5,1050.5" stroke="#9a9a9a" stroke-width="1.3" fill="none"/>
<rect x="1727" y="1037.5" width="15.5" height="11" rx="1.5" stroke="#1c1c1c" stroke-width="1.6" fill="none"/>
<rect x="1742.5" y="1041" width="2.5" height="4" fill="#1c1c1c"/>
<rect x="1734" y="1039.5" width="4.5" height="7" fill="#1c1c1c"/>
<path d="M1727.5,1035 C1722,1036 1721,1043 1725,1045 L1722.5,1050 C1727,1047 1730,1043 1730,1038 Z" fill="#1c1c1c"/>
<path d="M1879,1034 C1885,1035 1889.5,1040 1889.5,1045.5 C1889.5,1051 1885,1055 1879,1055 C1875.5,1055 1872.5,1053.5 1870.5,1051 C1877.5,1051 1881.5,1045 1881.5,1041 C1881.5,1038.5 1880.5,1036 1879,1034 Z" stroke="#1c1c1c" stroke-width="1.5" fill="none" stroke-linejoin="round"/>
</svg>
<div class="abs" style="left:1700px;top:1025.3px;width:155.5px;text-align:right;font-size:17px;line-height:17px;color:#1c1c1c;white-space:nowrap">20:48</div>
<div class="abs" style="left:1700px;top:1046.8px;width:155.5px;text-align:right;font-size:17.5px;line-height:17.5px;color:#1c1c1c;white-space:nowrap">24/11/2023</div>

</body></html>
